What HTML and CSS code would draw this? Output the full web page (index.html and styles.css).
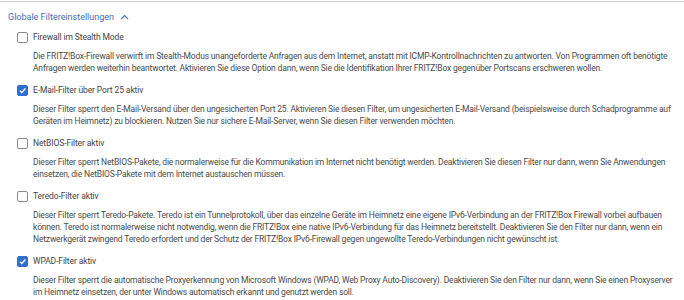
FILE: index.html
```html
<!DOCTYPE html>
<html lang="de">
<head>
    <meta charset="UTF-8">
    <title>Filter</title>
    <link rel="stylesheet" href="styles.css">
</head>
<body>
  <section class="panel">
    <h2 class="panel-title">Globale Filtereinstellungen
      <svg class="chevron" width="9" height="6" viewBox="0 0 9 6"><path d="M1 5 L4.5 1.5 L8 5" fill="none" stroke="#4a78b8" stroke-width="1.1"/></svg>
    </h2>

    <div class="option">
      <label class="opt-head"><span class="box"></span>Firewall im Stealth Mode</label>
      <p class="desc">Die FRITZ!Box-Firewall verwirft im Stealth-Modus unangeforderte Anfragen aus dem Internet, anstatt mit ICMP-Kontrollnachrichten zu antworten. Von Programmen oft benötigte Anfragen werden weiterhin beantwortet. Aktivieren Sie diese Option dann, wenn Sie die Identifikation Ihrer FRITZ!Box gegenüber Portscans erschweren wollen.</p>
    </div>

    <div class="option">
      <label class="opt-head"><span class="box checked"><svg width="9" height="9" viewBox="0 0 9 9"><path d="M1.8 4.6 L3.8 6.5 L7.4 2.5" fill="none" stroke="#fff" stroke-width="1.3"/></svg></span>E-Mail-Filter über Port 25 aktiv</label>
      <p class="desc">Dieser Filter sperrt den E-Mail-Versand über den ungesicherten Port 25. Aktivieren Sie diesen Filter, um ungesicherten E-Mail-Versand (beispielsweise durch Schadprogramme auf Geräten im Heimnetz) zu blockieren. Nutzen Sie nur sichere E-Mail-Server, wenn Sie diesen Filter verwenden möchten.</p>
    </div>

    <div class="option">
      <label class="opt-head"><span class="box"></span>NetBIOS-Filter aktiv</label>
      <p class="desc">Dieser Filter sperrt NetBIOS-Pakete, die normalerweise für die Kommunikation im Internet nicht benötigt werden. Deaktivieren Sie diesen Filter nur dann, wenn Sie Anwendungen einsetzen, die NetBIOS-Pakete mit dem Internet austauschen müssen.</p>
    </div>

    <div class="option">
      <label class="opt-head"><span class="box"></span>Teredo-Filter aktiv</label>
      <p class="desc">Dieser Filter sperrt Teredo-Pakete. Teredo ist ein Tunnelprotokoll, über das einzelne Geräte im Heimnetz eine eigene IPv6-Verbindung an der FRITZ!Box Firewall vorbei aufbauen können. Teredo ist normalerweise nicht notwendig, wenn die FRITZ!Box eine native IPv6-Verbindung für das Heimnetz bereitstellt. Deaktivieren Sie den Filter nur dann, wenn ein Netzwerkgerät zwingend Teredo erfordert und der Schutz der FRITZ!Box IPv6-Firewall gegen ungewollte Teredo-Verbindungen nicht gewünscht ist.</p>
    </div>

    <div class="option">
      <label class="opt-head"><span class="box checked"><svg width="9" height="9" viewBox="0 0 9 9"><path d="M1.8 4.6 L3.8 6.5 L7.4 2.5" fill="none" stroke="#fff" stroke-width="1.3"/></svg></span>WPAD-Filter aktiv</label>
      <p class="desc">Dieser Filter sperrt die automatische Proxyerkennung von Microsoft Windows (WPAD, Web Proxy Auto-Discovery). Deaktivieren Sie den Filter nur dann, wenn Sie einen Proxyserver im Heimnetz einsetzen, der unter Windows automatisch erkannt und genutzt werden soll.</p>
    </div>
  </section>
</body>
</html>
```

FILE: styles.css
```css
* {
    margin: 0;
    padding: 0;
    box-sizing: border-box;
}
body {
    background-color: #fff;
    font-family: Roboto, "Noto Sans", sans-serif;
    color: #4b4b4b;
}
.panel {
    border-top: 1px solid #cfcfcf;
    margin-top: 1px;
    padding: 8px 8px 0 8px;
}
.panel-title {
    font-size: 9px;
    font-weight: normal;
    color: #3f6fb3;
    height: 14px;
    line-height: 14px;
    display: flex;
    align-items: center;
    gap: 6px;
}
.option {
    padding-left: 9px;
    margin-top: 7px;
}
.option + .option {
    margin-top: 10px;
}
.opt-head {
    display: flex;
    align-items: center;
    gap: 5px;
    font-size: 8.5px;
    letter-spacing: -0.1px;
    color: #444;
    height: 12px;
}
.box {
    width: 11px;
    height: 11px;
    border: 1px solid #8a8a8a;
    border-radius: 2px;
    background: #fff;
    display: flex;
    align-items: center;
    justify-content: center;
}
.box.checked {
    background: #2e6fcf;
    border-color: #2e6fcf;
}
.desc {
    margin-top: 7px;
    padding-left: 16px;
    font-size: 8.5px;
    letter-spacing: -0.17px;
    line-height: 12px;
    color: #4b4b4b;
    max-width: 676px;
}
```
